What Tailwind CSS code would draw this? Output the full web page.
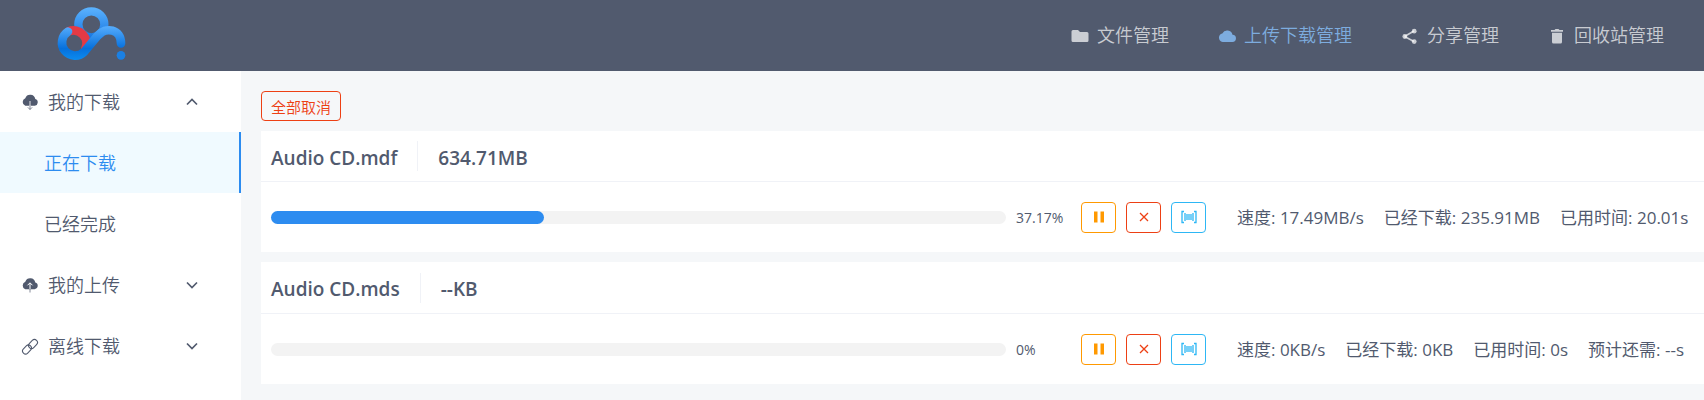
<!DOCTYPE html>
<html lang="zh-CN">
<head>
  <meta charset="UTF-8">
  <meta name="viewport" content="width=device-width, initial-scale=1.0">
  <title>上传下载管理</title>
  <script src="https://cdn.jsdelivr.net/npm/@tailwindcss/browser@4"></script>
  <style>
    body {
      font-family: 'Open Sans', 'Noto Sans CJK SC', sans-serif;
    }
  </style>
</head>
<body class="flex min-h-screen flex-col bg-[#f5f7f9] text-[#515a6e]">
<header class="flex h-[71px] items-center justify-between bg-[#515a6e] px-10">
  <a href="#" aria-label="首页">
    <svg class="h-[71px] w-[100px]" viewBox="0 0 300 213" fill="none" stroke-linecap="round">
      <defs>
        <linearGradient id="ring" gradientUnits="userSpaceOnUse" x1="0" y1="22" x2="0" y2="120">
          <stop offset="0" stop-color="#5cb3ff"/>
          <stop offset="1" stop-color="#1273e0"/>
        </linearGradient>
        <linearGradient id="wave" gradientUnits="userSpaceOnUse" x1="0" y1="78" x2="0" y2="182">
          <stop offset="0" stop-color="#57adfd"/>
          <stop offset="0.65" stop-color="#0670dc"/>
          <stop offset="1" stop-color="#0c8df0"/>
        </linearGradient>
      </defs>
      <circle cx="154" cy="73" r="39" stroke="url(#ring)" stroke-width="25"/>
      <path d="M86 94A39 39 0 0 1 136 146" stroke="#e43a45" stroke-width="26"/>
      <path d="M84 95A39 39 0 1 0 133 155L172 108C198 78 243 88 243 130" stroke="url(#wave)" stroke-width="26"/>
      <circle cx="243" cy="166" r="13" fill="#1a80e4"/>
    </svg>
  </a>
  <nav class="flex gap-[49px] pb-[2px] text-lg font-[350] text-white/70">
    <a href="#" class="flex items-center gap-2">
      <svg class="mt-[2px] size-[18px]" viewBox="0 0 18 18" fill="currentColor"><path d="M2 3h5l2 2h7a1.500 1.500 0 0 1 1.500 1.500v7A1.500 1.500 0 0 1 16 15H2a1.500 1.500 0 0 1-1.500-1.500v-9A1.500 1.500 0 0 1 2 3z"/></svg>
      文件管理
    </a>
    <a href="#" class="flex items-center gap-2 text-[#7dacdf]">
      <svg class="mt-[2px] size-[18px]" viewBox="0 0 18 18" fill="currentColor"><path d="M14.500 7.800A5.500 5.500 0 0 0 4.300 6.400 4.400 4.400 0 0 0 4.600 15h9.600a3.600 3.600 0 0 0 .3-7.200z"/></svg>
      上传下载管理
    </a>
    <a href="#" class="flex items-center gap-2">
      <svg class="mt-[2px] size-[18px]" viewBox="0 0 18 18" fill="currentColor"><path d="M3.500 9.500 13 4M3.500 9.500 13 14.500" stroke="currentColor" stroke-width="1.600"/><circle cx="3.800" cy="9.500" r="2.400"/><circle cx="13.200" cy="4.200" r="2.400"/><circle cx="13.200" cy="14.600" r="2.400"/></svg>
      分享管理
    </a>
    <a href="#" class="flex items-center gap-2">
      <svg class="mt-[2px] size-[18px]" viewBox="0 0 18 18" fill="currentColor"><path d="M3 3h3.500l1-1h3l1 1H15v1.800H3zM4 5.800h10V15a1.500 1.500 0 0 1-1.500 1.500h-7A1.500 1.500 0 0 1 4 15z"/></svg>
      回收站管理
    </a>
  </nav>
</header>

<div class="flex flex-1">
  <aside class="w-[241px] shrink-0 bg-white text-lg font-[350]">
    <button type="button" aria-expanded="true" class="flex h-[61px] w-full items-center pr-[42px] pl-[21px]">
      <svg class="mr-[9px] size-[18px]" viewBox="0 0 18 18"><path d="M14.300 6A5.200 5.200 0 0 0 4.300 5.300 4 4 0 0 0 4.300 12.800h9.400A3.500 3.500 0 0 0 14.300 6z" fill="currentColor"/><path d="M9 8v5" stroke="#fff" stroke-opacity=".7" stroke-width="1.200"/><path d="M9 13v3.500M6.800 14.300 9 16.500l2.200-2.200" fill="none" stroke="currentColor" stroke-opacity=".7"/></svg>
      我的下载
      <svg class="ml-auto size-[14px]" viewBox="0 0 14 14" fill="none" stroke="currentColor" stroke-width="1.700"><path d="M2 9.500 7 4.500l5 5"/></svg>
    </button>
    <a href="#" class="flex h-[61px] items-center border-r-2 border-[#2d8cf0] bg-[#f0faff] pl-11 text-[#2d8cf0]">正在下载</a>
    <a href="#" class="flex h-[61px] items-center pl-11">已经完成</a>
    <button type="button" aria-expanded="false" class="flex h-[61px] w-full items-center pr-[42px] pl-[21px]">
      <svg class="mr-[9px] size-[18px]" viewBox="0 0 18 18"><path d="M14.300 6.500A5.200 5.200 0 0 0 4.300 5.800 4 4 0 0 0 4.300 13.300h9.400a3.500 3.500 0 0 0 .6-6.800z" fill="currentColor"/><path d="M9 13.200V7M6.500 9.300 9 6.800l2.500 2.500" fill="none" stroke="#fff"/><path d="M9 13v3.500" stroke="currentColor" stroke-opacity=".7"/></svg>
      我的上传
      <svg class="ml-auto size-[14px]" viewBox="0 0 14 14" fill="none" stroke="currentColor" stroke-width="1.700"><path d="m2 4.500 5 5 5-5"/></svg>
    </button>
    <button type="button" aria-expanded="false" class="flex h-[61px] w-full items-center pr-[42px] pl-[21px]">
      <svg class="mr-[9px] size-[18px]" viewBox="0 0 18 18" fill="none" stroke="currentColor" stroke-width="1.100"><rect x="-5" y="-3" width="10" height="6" rx="3" transform="translate(12 7) rotate(-45)"/><rect x="-5" y="-3" width="10" height="6" rx="3" transform="translate(6 12.500) rotate(-45)"/></svg>
      离线下载
      <svg class="ml-auto size-[14px]" viewBox="0 0 14 14" fill="none" stroke="currentColor" stroke-width="1.700"><path d="m2 4.500 5 5 5-5"/></svg>
    </button>
  </aside>

  <main class="flex min-w-0 flex-1 flex-col items-stretch gap-[10px] pt-5 pl-5">
    <button type="button" class="h-[30px] w-20 rounded-[4px] border border-[#ed4014] pt-[2px] text-[15px] leading-none font-[350] text-[#ed4014]">全部取消</button>

    <section class="bg-white">
      <h2 class="flex h-[51px] items-center gap-5 border-b border-[#f0f2f7] pl-[10px] text-[19px] font-semibold">
        <span class="pt-1">Audio CD.mdf</span>
        <span class="h-[30px] w-px bg-[#f0f2f7]"></span>
        <span class="pt-1">634.71MB</span>
      </h2>
      <div class="flex h-[70px] items-center pl-[10px]">
        <div role="progressbar" aria-label="Audio CD.mdf" aria-valuenow="37.17" class="h-[13px] flex-1 rounded-full bg-[#f3f3f3]">
          <div class="h-full rounded-full bg-[#2d8cf0]" style="width: 37.17%"></div>
        </div>
        <span class="w-[75px] pt-[2px] pl-[10px] text-sm">37.17%</span>
        <div class="flex gap-[10px]">
          <button type="button" aria-label="暂停" class="flex h-[31px] w-[35px] items-center justify-center rounded-[4px] border border-[#ff9900] text-[#ff9900]">
            <svg class="size-4" viewBox="0 0 16 16" fill="currentColor"><path d="M3 2.500h3.500v11H3zM9.500 2.500H13v11H9.500z"/></svg>
          </button>
          <button type="button" aria-label="取消" class="flex h-[31px] w-[35px] items-center justify-center rounded-[4px] border border-[#ed4014] text-[#ed4014]">
            <svg class="size-4" viewBox="0 0 16 16" stroke="currentColor" stroke-width="1.300"><path d="m4 4 8 8M12 4l-8 8"/></svg>
          </button>
          <button type="button" aria-label="详情" class="flex h-[31px] w-[35px] items-center justify-center rounded-[4px] border border-[#2db7f5] text-[#2db7f5]">
            <svg class="size-4" viewBox="0 0 16 16" fill="none" stroke="currentColor" stroke-width="1.300"><path d="M3 2.500H1v11h2M13 2.500h2v11h-2M4 4v8M6 5v6M8 5v6M10 5v6M12 4v8"/></svg>
          </button>
        </div>
        <div class="flex w-[498px] gap-5 pt-[2px] pl-[31px] text-[17px] whitespace-nowrap">
          <span>速度: 17.49MB/s</span>
          <span>已经下载: 235.91MB</span>
          <span>已用时间: 20.01s</span>
        </div>
      </div>
    </section>

    <section class="bg-white">
      <h2 class="flex h-[52px] items-center gap-5 border-b border-[#f0f2f7] pl-[10px] text-[19px] font-semibold">
        <span class="pt-1">Audio CD.mds</span>
        <span class="h-[30px] w-px bg-[#f0f2f7]"></span>
        <span class="pt-1">--KB</span>
      </h2>
      <div class="flex h-[70px] items-center pl-[10px]">
        <div role="progressbar" aria-label="Audio CD.mds" aria-valuenow="0" class="h-[13px] flex-1 rounded-full bg-[#f3f3f3]"></div>
        <span class="w-[75px] pt-[2px] pl-[10px] text-sm">0%</span>
        <div class="flex gap-[10px]">
          <button type="button" aria-label="暂停" class="flex h-[31px] w-[35px] items-center justify-center rounded-[4px] border border-[#ff9900] text-[#ff9900]">
            <svg class="size-4" viewBox="0 0 16 16" fill="currentColor"><path d="M3 2.500h3.500v11H3zM9.500 2.500H13v11H9.500z"/></svg>
          </button>
          <button type="button" aria-label="取消" class="flex h-[31px] w-[35px] items-center justify-center rounded-[4px] border border-[#ed4014] text-[#ed4014]">
            <svg class="size-4" viewBox="0 0 16 16" stroke="currentColor" stroke-width="1.300"><path d="m4 4 8 8M12 4l-8 8"/></svg>
          </button>
          <button type="button" aria-label="详情" class="flex h-[31px] w-[35px] items-center justify-center rounded-[4px] border border-[#2db7f5] text-[#2db7f5]">
            <svg class="size-4" viewBox="0 0 16 16" fill="none" stroke="currentColor" stroke-width="1.300"><path d="M3 2.500H1v11h2M13 2.500h2v11h-2M4 4v8M6 5v6M8 5v6M10 5v6M12 4v8"/></svg>
          </button>
        </div>
        <div class="flex w-[498px] gap-5 pt-[2px] pl-[31px] text-[17px] whitespace-nowrap">
          <span>速度: 0KB/s</span>
          <span>已经下载: 0KB</span>
          <span>已用时间: 0s</span>
          <span>预计还需: --s</span>
        </div>
      </div>
    </section>
  </main>
</div>
</body>
</html>
